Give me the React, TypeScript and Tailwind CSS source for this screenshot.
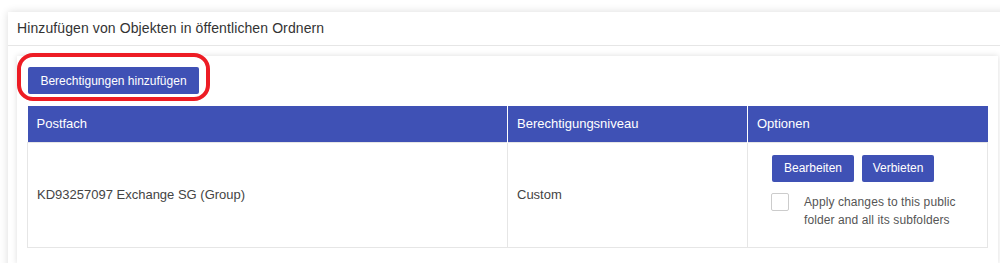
import React from "react";

export default function App() {
	return (
		<div
			className="h-[263px] w-[1000px] overflow-hidden bg-white pt-3 pl-2"
			style={{ fontFamily: '"Liberation Sans", Arial, sans-serif' }}>
			<div className="w-[1010px] h-[300px] bg-white shadow-[0_0_8px_rgba(0,0,0,0.14)]">
				<div className="h-[34px] flex items-center pl-[9px] border-b border-[#e6e6e6] text-[14px] tracking-[0.1px] text-[#333]">
					Hinzufügen von Objekten in öffentlichen Ordnern
				</div>
				<div className="pt-[10px] pl-[9px]">
					<div className="relative w-[981px] bg-white pt-[11px] pl-[10px] pr-[10px] pb-4 shadow-[0_0_6px_rgba(0,0,0,0.14)]">
						<div className="absolute left-0 top-[-3px] w-[193px] h-[48px] border-4 border-[#ed1c24] rounded-[16px]" />
						<button className="ml-px h-[27px] w-[171px] rounded-[2px] bg-[#3f51b5] text-[12px] text-white">
							Berechtigungen hinzufügen
						</button>
						<table className="mt-3 w-[961px] border-collapse text-[13px]">
							<thead>
								<tr className="bg-[#3f51b5] text-white h-9">
									<th className="w-[480px] text-left font-normal pl-[9px] border-r border-white">
										Postfach
									</th>
									<th className="w-[240px] text-left font-normal pl-[9px] border-r border-white">
										Berechtigungsniveau
									</th>
									<th className="text-left font-normal pl-[9px]">Optionen</th>
								</tr>
							</thead>
							<tbody>
								<tr className="h-[105px] text-[#444]">
									<td className="pl-[9px] border border-[#e6e6e6]">
										KD93257097 Exchange SG (Group)
									</td>
									<td className="pl-[9px] border border-[#e6e6e6]">Custom</td>
									<td className="border border-[#e6e6e6] pl-6 align-top pt-3">
										<div className="flex gap-2">
											<button className="h-[27px] w-[82px] rounded-[2px] bg-[#3f51b5] text-[12px] text-white">
												Bearbeiten
											</button>
											<button className="h-[27px] w-[72px] rounded-[2px] bg-[#3f51b5] text-[12px] text-white">
												Verbieten
											</button>
										</div>
										<div className="mt-[11px] flex items-start">
											<span className="-ml-px h-[18px] w-[18px] rounded-[2px] border border-[#ccc] bg-white" />
											<span className="ml-[15px] text-[12px] leading-[18px] tracking-[0.1px] text-[#555]">
												Apply changes to this public
												<br />
												folder and all its subfolders
											</span>
										</div>
									</td>
								</tr>
							</tbody>
						</table>
					</div>
				</div>
			</div>
		</div>
	);
}
